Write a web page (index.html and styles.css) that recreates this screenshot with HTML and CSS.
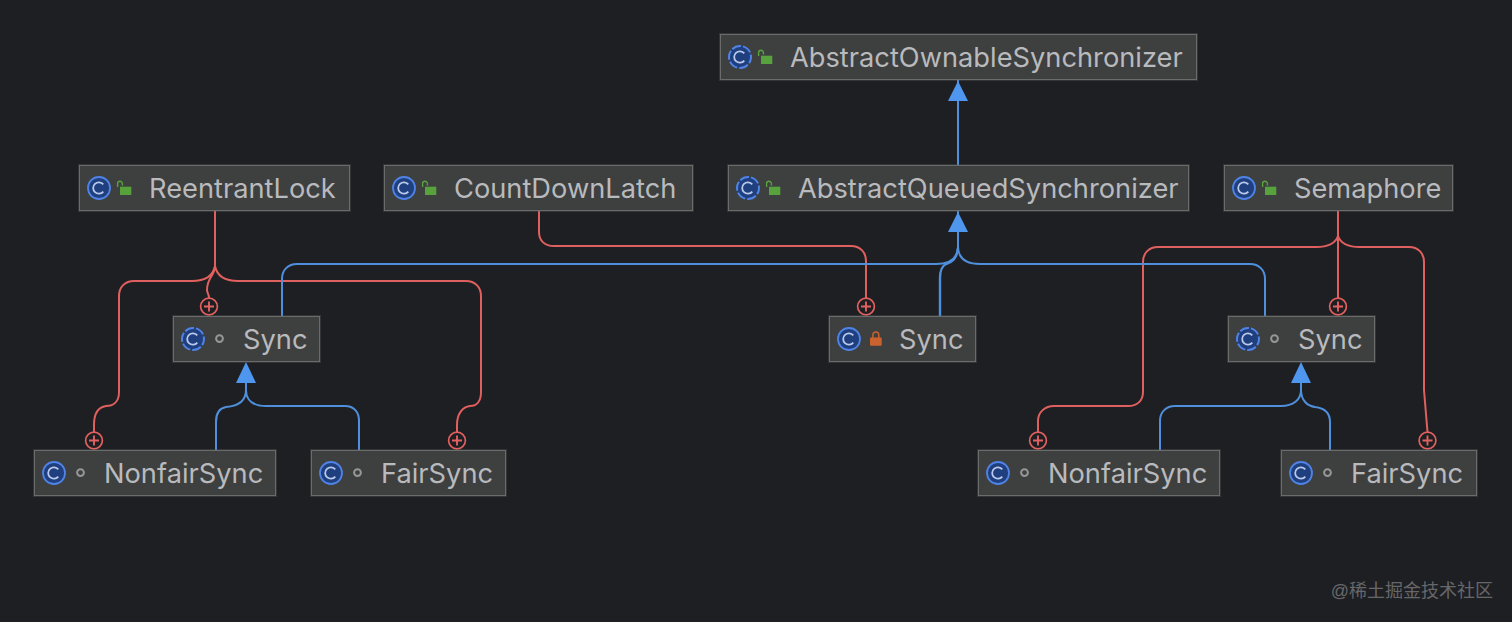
FILE: index.html
```html
<!DOCTYPE html>
<html lang="en">
<head>
<meta charset="utf-8">
<title>Class diagram</title>
<link rel="stylesheet" href="styles.css">
</head>
<body>
<svg width="0" height="0" class="defs">
  <defs>
    <symbol id="cls" viewBox="0 0 24 24"><circle cx="12" cy="12" r="11" fill="#1f3f7e" stroke="#4f83e6" stroke-width="1.8"/><path d="M16.3 8.4a5.7 5.7 0 1 0 0 7.2" fill="none" stroke="#b8c9ec" stroke-width="1.8"/></symbol>
    <symbol id="abs" viewBox="0 0 24 24"><circle cx="12" cy="12" r="11" fill="#1f3f7e" stroke="#4f83e6" stroke-width="2" stroke-dasharray="9.5 2" stroke-dashoffset="3"/><path d="M16.3 8.4a5.7 5.7 0 1 0 0 7.2" fill="none" stroke="#b8c9ec" stroke-width="1.8"/></symbol>
    <symbol id="pub" viewBox="0 0 16 16"><path d="M1.6 7V3.6a2.4 2.4 0 0 1 4.8 0V5.5" fill="none" stroke="#58a23e" stroke-width="1.4"/><rect x="4" y="6.7" width="11.3" height="8.3" fill="#58a23e"/></symbol>
    <symbol id="prv" viewBox="0 0 16 16"><path d="M6.9 7V3.9a2.95 2.95 0 0 1 5.9 0V7" fill="none" stroke="#c9622e" stroke-width="1.5"/><rect x="4" y="6.5" width="11.7" height="8.2" rx="1" fill="#c9622e"/></symbol>
    <symbol id="pkg" viewBox="0 0 16 16"><circle cx="9.5" cy="7.6" r="3.4" fill="none" stroke="#969696" stroke-width="2"/></symbol>
    <symbol id="inner" viewBox="0 0 20 20"><circle cx="10" cy="10" r="8.4" fill="#1e1f22" stroke="#e2605f" stroke-width="1.7"/><path d="M10 5v10M5 10h10" stroke="#e2605f" stroke-width="1.9" fill="none"/></symbol>
  </defs>
</svg>
<main class="canvas">
  <svg class="edges" width="1512" height="622" viewBox="0 0 1512 622">
    <g class="red">
      <path d="M215 211V266C215 276 207 277 207 290C207 293 209 294 209 298"/>
      <path d="M215 266C213 276 205 281 192 281H134C125 281 119 287 119 296V392C119 402 113 406 106 406C99 407 94 413 94 425V432"/>
      <path d="M215 266C217 276 225 281 238 281H466C475 281 481 287 481 296V392C481 402 476 406 470 406C463 407 457 413 457 425V432"/>
      <path d="M539 211V232C539 241 545 246 554 246H851C860 246 866 252 866 261V298"/>
      <path d="M1338 211V298"/>
      <path d="M1338 236C1336 242 1330 247 1316 247H1158C1149 247 1143 253 1143 262V392C1143 401 1137 406 1128 406H1054C1045 406 1038 412 1038 421V432"/>
      <path d="M1338 236C1340 242 1346 247 1360 247H1409C1418 247 1424 253 1424 262V390L1427.5 432"/>
    </g>
    <g class="blue">
      <path d="M958 80V165"/>
      <path d="M958 211V246"/>
      <path d="M958 246C958 258 950 264 936 264H297C288 264 282 270 282 279V316"/>
      <path d="M958 246C958 258 966 264 980 264H1250C1259 264 1265 270 1265 279V316"/>
      <path class="thick" d="M958 248C957 259 952 262 946 264C942 266 940 270 940 278V316"/>
      <path d="M246 380V390C246 401 238 406 226 407C220 408 216 412 216 422V450"/>
      <path d="M246 380V390C246 401 254 406 266 406H345C354 406 359 412 359 421V450"/>
      <path d="M1301 380V390C1301 400 1293 406 1281 406H1175C1166 406 1160 412 1160 421V450"/>
      <path d="M1301 380V390C1301 401 1308 406 1315 407C1324 408 1330 412 1330 422V450"/>
    </g>
    <g class="arrows">
      <path d="M958 81L968 101H948Z"/>
      <path d="M958 212L968 232H948Z"/>
      <path d="M246 362L256 383H236Z"/>
      <path d="M1301 362L1311 383H1291Z"/>
    </g>
    <use href="#inner" x="199" y="296.5" width="20" height="20"/>
    <use href="#inner" x="856" y="296.5" width="20" height="20"/>
    <use href="#inner" x="1328" y="296.5" width="20" height="20"/>
    <use href="#inner" x="84" y="430.5" width="20" height="20"/>
    <use href="#inner" x="447" y="430.5" width="20" height="20"/>
    <use href="#inner" x="1028" y="430.5" width="20" height="20"/>
    <use href="#inner" x="1417.5" y="430.5" width="20" height="20"/>
  </svg>

  <div class="node n-aos"><svg class="ic-c"><use href="#abs"/></svg><svg class="ic-v"><use href="#pub"/></svg><span class="label">AbstractOwnableSynchronizer</span></div>
  <div class="node n-rl"><svg class="ic-c"><use href="#cls"/></svg><svg class="ic-v"><use href="#pub"/></svg><span class="label">ReentrantLock</span></div>
  <div class="node n-cdl"><svg class="ic-c"><use href="#cls"/></svg><svg class="ic-v"><use href="#pub"/></svg><span class="label">CountDownLatch</span></div>
  <div class="node n-aqs"><svg class="ic-c"><use href="#abs"/></svg><svg class="ic-v"><use href="#pub"/></svg><span class="label">AbstractQueuedSynchronizer</span></div>
  <div class="node n-sem"><svg class="ic-c"><use href="#cls"/></svg><svg class="ic-v"><use href="#pub"/></svg><span class="label">Semaphore</span></div>
  <div class="node n-s1"><svg class="ic-c"><use href="#abs"/></svg><svg class="ic-v"><use href="#pkg"/></svg><span class="label">Sync</span></div>
  <div class="node n-s2"><svg class="ic-c"><use href="#cls"/></svg><svg class="ic-v"><use href="#prv"/></svg><span class="label">Sync</span></div>
  <div class="node n-s3"><svg class="ic-c"><use href="#abs"/></svg><svg class="ic-v"><use href="#pkg"/></svg><span class="label">Sync</span></div>
  <div class="node n-nf1"><svg class="ic-c"><use href="#cls"/></svg><svg class="ic-v"><use href="#pkg"/></svg><span class="label">NonfairSync</span></div>
  <div class="node n-f1"><svg class="ic-c"><use href="#cls"/></svg><svg class="ic-v"><use href="#pkg"/></svg><span class="label">FairSync</span></div>
  <div class="node n-nf2"><svg class="ic-c"><use href="#cls"/></svg><svg class="ic-v"><use href="#pkg"/></svg><span class="label">NonfairSync</span></div>
  <div class="node n-f2"><svg class="ic-c"><use href="#cls"/></svg><svg class="ic-v"><use href="#pkg"/></svg><span class="label">FairSync</span></div>

  <div class="mark">@稀土掘金技术社区</div>
</main>
</body>
</html>
```
FILE: styles.css
```css
html, body {
  margin: 0;
  padding: 0;
  background: #1e1f22;
  overflow: hidden;
}
.defs { position: absolute; }
.canvas {
  position: relative;
  width: 1512px;
  height: 622px;
  background: #1e1f22;
  font-family: Inter, "Noto Sans", sans-serif;
}
.edges { position: absolute; left: 0; top: 0; }
.edges path { fill: none; stroke-width: 2; }
.red path { stroke: #e0605f; }
.blue path { stroke: #4f8fdc; }
.blue path.thick { stroke-width: 2.4; }
.edges .arrows path { fill: #4f97ee; stroke: none; }
.node {
  position: absolute;
  box-sizing: border-box;
  height: 46px;
  display: flex;
  align-items: center;
  background: #3e3f3f;
  border: 1px solid #6a6b6b;
  box-shadow: 0 0 0 1px rgba(106, 107, 107, 0.3);
  color: #b9babd;
  font-size: 27.25px;
  padding-left: 7px;
}
.ic-c { width: 24px; height: 24px; flex: none; }
.ic-v { width: 16px; height: 16px; flex: none; margin-left: 5px; }
.label { margin-left: 17px; white-space: nowrap; }
.n-aos { left: 720px; top: 34px; width: 477px; }
.n-rl { left: 79px; top: 165px; width: 271px; }
.n-cdl { left: 384px; top: 165px; width: 309px; }
.n-aqs { left: 728px; top: 165px; width: 461px; }
.n-sem { left: 1224px; top: 165px; width: 229px; }
.n-s1 { left: 173px; top: 316px; width: 147px; }
.n-s2 { left: 829px; top: 316px; width: 147px; }
.n-s3 { left: 1228px; top: 316px; width: 147px; }
.n-nf1 { left: 34px; top: 450px; width: 242px; }
.n-f1 { left: 311px; top: 450px; width: 195px; }
.n-nf2 { left: 978px; top: 450px; width: 242px; }
.n-f2 { left: 1281px; top: 450px; width: 196px; }
.mark {
  position: absolute;
  right: 19px;
  top: 580px;
  font-family: "Liberation Sans", "Noto Sans CJK SC", sans-serif;
  font-size: 18px;
  line-height: 22px;
  color: #66676a;
  white-space: nowrap;
}
```
